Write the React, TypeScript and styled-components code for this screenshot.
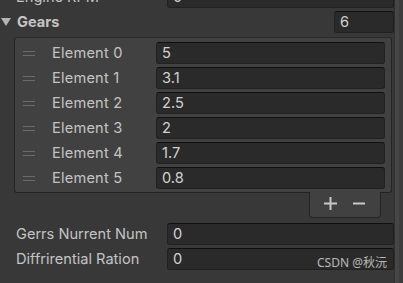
import styled, { createGlobalStyle } from "styled-components"

const GlobalStyle = createGlobalStyle`
  html, body {
    margin: 0;
    padding: 0;
    background: #383838;
  }
  body {
    font-family: Inter, "Noto Sans", "Noto Sans CJK SC", sans-serif;
    -webkit-font-smoothing: antialiased;
  }
`

const Page = styled.div`
  position: relative;
  display: flex;
  width: 403px;
  height: 283px;
  overflow: hidden;
  background: #383838;
  color: #c4c4c4;
  font-size: 14.6px;
`

const Content = styled.div`
  flex: 1;
  display: flex;
  flex-direction: column;
`

const ScrollStrip = styled.div`
  width: 8px;
  flex: none;
  border-left: 1px solid #2e2e2e;
  background: linear-gradient(to right, #464646 0 4px, #3c3c3c 4px);
`

const PropRow = styled.div<{ $top?: number }>`
  display: flex;
  align-items: center;
  height: 22px;
  margin-top: ${(p) => p.$top ?? 3}px;
  padding-left: 16px;
`

const Label = styled.div`
  flex: none;
  width: 151px;
  white-space: nowrap;
`

const Field = styled.div<{ $width?: number }>`
  box-sizing: border-box;
  height: 22px;
  width: ${(p) => (p.$width ? `${p.$width}px` : "auto")};
  flex: ${(p) => (p.$width ? "none" : "1")};
  margin-left: ${(p) => (p.$width ? "auto" : "0")};
  display: flex;
  align-items: center;
  padding-left: 5px;
  background: #2a2a2a;
  border: 1px solid #212121;
  border-top-color: #0f0f0f;
  border-radius: 3px;
  color: #d2d2d2;
`

const HeaderRow = styled.div`
  display: flex;
  align-items: center;
  height: 22px;
  margin-top: 3px;
`

const Foldout = styled.svg`
  width: 10px;
  height: 10px;
  margin-left: 1px;
  margin-right: 6px;
  flex: none;
`

const HeaderLabel = styled.div`
  font-weight: 700;
`

const ListBox = styled.div`
  box-sizing: border-box;
  margin: 4px 2px 0 14px;
  padding: 4px 6px 3px 0;
  display: flex;
  flex-direction: column;
  gap: 3px;
  background: #414141;
  border: 1px solid #242424;
  border-top-color: #2a2a2a;
  border-radius: 3px;
`

const ElementRow = styled.div`
  display: flex;
  align-items: center;
  height: 22px;
`

const Handle = styled.div`
  flex: none;
  width: 12px;
  height: 5px;
  margin-left: 8px;
  margin-right: 17px;
  border-top: 1px solid #6b6b6b;
  border-bottom: 1px solid #6b6b6b;
  box-sizing: border-box;
`

const ElementLabel = styled.div`
  flex: none;
  width: 104px;
  white-space: nowrap;
  letter-spacing: 0.2px;
`

const Footer = styled.div`
  align-self: flex-end;
  display: flex;
  align-items: center;
  justify-content: space-around;
  box-sizing: border-box;
  width: 72px;
  height: 26px;
  margin-right: 13px;
  margin-top: -1px;
  padding: 0 6px 2px;
  background: #414141;
  border: 1px solid #242424;
  border-top: none;
  border-radius: 0 0 4px 4px;
`

const IconButton = styled.svg`
  width: 13px;
  height: 13px;
`

const Watermark = styled.div`
  position: absolute;
  right: 16px;
  bottom: 12px;
  font-family: "Noto Sans", "Noto Sans CJK SC", sans-serif;
  font-size: 12px;
  color: rgba(230, 230, 230, 0.75);
`

const elements = ["5", "3.1", "2.5", "2", "1.7", "0.8"]

export default function App() {
  return (
    <>
      <GlobalStyle />
      <Page>
        <Content>
          <PropRow $top={-14}>
            <Label>Engine RPM</Label>
            <Field>0</Field>
          </PropRow>

          <HeaderRow>
            <Foldout viewBox="0 0 10 10">
              <polygon points="0,1 10,1 5,9" fill="#b4b4b4" />
            </Foldout>
            <HeaderLabel>Gears</HeaderLabel>
            <Field $width={60}>6</Field>
          </HeaderRow>

          <ListBox>
            {elements.map((v, i) => (
              <ElementRow key={i}>
                <Handle />
                <ElementLabel>Element {i}</ElementLabel>
                <Field>{v}</Field>
              </ElementRow>
            ))}
          </ListBox>
          <Footer>
            <IconButton viewBox="0 0 13 13">
              <rect x="0" y="5.5" width="13" height="2" fill="#c8c8c8" />
              <rect x="5.5" y="0" width="2" height="13" fill="#c8c8c8" />
            </IconButton>
            <IconButton viewBox="0 0 13 13">
              <rect x="0" y="5.5" width="12" height="2" fill="#c8c8c8" />
            </IconButton>
          </Footer>

          <PropRow $top={5}>
            <Label>Gerrs Nurrent Num</Label>
            <Field>0</Field>
          </PropRow>
          <PropRow>
            <Label>Diffrirential Ration</Label>
            <Field>0</Field>
          </PropRow>
        </Content>
        <ScrollStrip />
        <Watermark>CSDN @秋沅</Watermark>
      </Page>
    </>
  )
}
